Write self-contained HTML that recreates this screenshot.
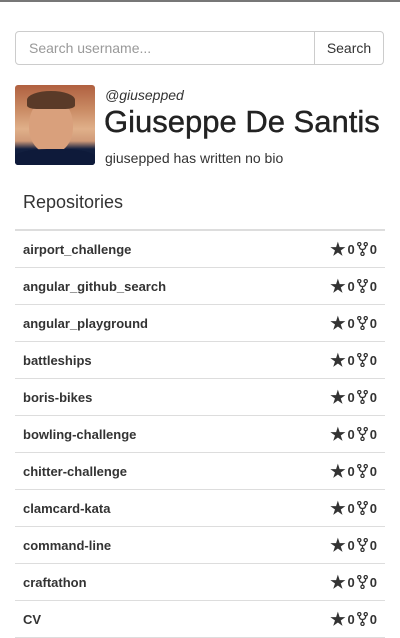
<!DOCTYPE html>
<html><head><style>
body{margin:0;width:400px;height:631px;overflow:hidden;background:#fff;font-family:"Liberation Sans",Arial,sans-serif;color:#333;position:relative}
.topline{position:absolute;left:0;top:0;width:400px;height:2px;background:#777}
.search{position:absolute;left:15px;top:31px;width:367px;height:32px;border:1px solid #ccc;border-radius:4px;display:flex}
.search .in{flex:1;padding-left:13px;line-height:32px;font-size:14px;color:#999}
.search .bt{width:68px;border-left:1px solid #ccc;line-height:32px;font-size:14px;text-align:center;color:#333}
.av{position:absolute;left:15px;top:85px;width:80px;height:80px;border-radius:3px;background:linear-gradient(180deg,#b06040 0%,#c98a63 30%,#e0b08a 55%,#d09a78 70%,#132040 80%,#0c1838 100%);overflow:hidden}
.face{position:absolute;left:14px;top:12px;width:44px;height:56px;border-radius:50% 50% 45% 45%;background:#d9a07c}
.hair{position:absolute;left:12px;top:6px;width:48px;height:18px;border-radius:50% 50% 20% 20%;background:#5a3a28}
.shirt{position:absolute;left:0;top:64px;width:80px;height:20px;background:#0e1a3a;border-radius:40% 40% 0 0}
.user{position:absolute;left:105px;top:87px;font-size:14px;font-style:italic}
.name{position:absolute;left:104px;top:104px;font-size:31px;color:#222;-webkit-text-stroke:0.4px #222}
.bio{position:absolute;left:105px;top:150px;font-size:14px}
h3{position:absolute;left:23px;top:192px;margin:0;font-size:18px;font-weight:normal}
.list{position:absolute;left:15px;top:229px;width:370px;border-top:2px solid #ddd}
.row{height:36px;border-bottom:1px solid #ddd;display:flex;align-items:center;justify-content:space-between;padding:0 8px;font-size:13px;font-weight:bold}
.st{display:flex;align-items:center;gap:2px;font-size:13px}
.star{font-size:17px;line-height:13px}
</style></head><body>
<div class="topline"></div>
<div class="search"><div class="in">Search username...</div><div class="bt">Search</div></div>
<div class="av"><div class="face"></div><div class="hair"></div><div class="shirt"></div></div>
<div class="user">@giusepped</div>
<div class="name">Giuseppe De Santis</div>
<div class="bio">giusepped has written no bio</div>
<h3>Repositories</h3>
<div class="list">
<div class="row"><span>airport_challenge</span><span class="st"><span class="star">★</span> 0 <svg width="11" height="14" viewBox="0 0 10 13"><circle cx="2" cy="2" r="1.5" fill="none" stroke="#333" stroke-width="1.2"/><circle cx="8" cy="2" r="1.5" fill="none" stroke="#333" stroke-width="1.2"/><circle cx="5" cy="11" r="1.5" fill="none" stroke="#333" stroke-width="1.2"/><path d="M2 3.5Q2 7 5 7Q8 7 8 3.5M5 7V9.5" fill="none" stroke="#333" stroke-width="1.2"/></svg> 0</span></div>
<div class="row"><span>angular_github_search</span><span class="st"><span class="star">★</span> 0 <svg width="11" height="14" viewBox="0 0 10 13"><circle cx="2" cy="2" r="1.5" fill="none" stroke="#333" stroke-width="1.2"/><circle cx="8" cy="2" r="1.5" fill="none" stroke="#333" stroke-width="1.2"/><circle cx="5" cy="11" r="1.5" fill="none" stroke="#333" stroke-width="1.2"/><path d="M2 3.5Q2 7 5 7Q8 7 8 3.5M5 7V9.5" fill="none" stroke="#333" stroke-width="1.2"/></svg> 0</span></div>
<div class="row"><span>angular_playground</span><span class="st"><span class="star">★</span> 0 <svg width="11" height="14" viewBox="0 0 10 13"><circle cx="2" cy="2" r="1.5" fill="none" stroke="#333" stroke-width="1.2"/><circle cx="8" cy="2" r="1.5" fill="none" stroke="#333" stroke-width="1.2"/><circle cx="5" cy="11" r="1.5" fill="none" stroke="#333" stroke-width="1.2"/><path d="M2 3.5Q2 7 5 7Q8 7 8 3.5M5 7V9.5" fill="none" stroke="#333" stroke-width="1.2"/></svg> 0</span></div>
<div class="row"><span>battleships</span><span class="st"><span class="star">★</span> 0 <svg width="11" height="14" viewBox="0 0 10 13"><circle cx="2" cy="2" r="1.5" fill="none" stroke="#333" stroke-width="1.2"/><circle cx="8" cy="2" r="1.5" fill="none" stroke="#333" stroke-width="1.2"/><circle cx="5" cy="11" r="1.5" fill="none" stroke="#333" stroke-width="1.2"/><path d="M2 3.5Q2 7 5 7Q8 7 8 3.5M5 7V9.5" fill="none" stroke="#333" stroke-width="1.2"/></svg> 0</span></div>
<div class="row"><span>boris-bikes</span><span class="st"><span class="star">★</span> 0 <svg width="11" height="14" viewBox="0 0 10 13"><circle cx="2" cy="2" r="1.5" fill="none" stroke="#333" stroke-width="1.2"/><circle cx="8" cy="2" r="1.5" fill="none" stroke="#333" stroke-width="1.2"/><circle cx="5" cy="11" r="1.5" fill="none" stroke="#333" stroke-width="1.2"/><path d="M2 3.5Q2 7 5 7Q8 7 8 3.5M5 7V9.5" fill="none" stroke="#333" stroke-width="1.2"/></svg> 0</span></div>
<div class="row"><span>bowling-challenge</span><span class="st"><span class="star">★</span> 0 <svg width="11" height="14" viewBox="0 0 10 13"><circle cx="2" cy="2" r="1.5" fill="none" stroke="#333" stroke-width="1.2"/><circle cx="8" cy="2" r="1.5" fill="none" stroke="#333" stroke-width="1.2"/><circle cx="5" cy="11" r="1.5" fill="none" stroke="#333" stroke-width="1.2"/><path d="M2 3.5Q2 7 5 7Q8 7 8 3.5M5 7V9.5" fill="none" stroke="#333" stroke-width="1.2"/></svg> 0</span></div>
<div class="row"><span>chitter-challenge</span><span class="st"><span class="star">★</span> 0 <svg width="11" height="14" viewBox="0 0 10 13"><circle cx="2" cy="2" r="1.5" fill="none" stroke="#333" stroke-width="1.2"/><circle cx="8" cy="2" r="1.5" fill="none" stroke="#333" stroke-width="1.2"/><circle cx="5" cy="11" r="1.5" fill="none" stroke="#333" stroke-width="1.2"/><path d="M2 3.5Q2 7 5 7Q8 7 8 3.5M5 7V9.5" fill="none" stroke="#333" stroke-width="1.2"/></svg> 0</span></div>
<div class="row"><span>clamcard-kata</span><span class="st"><span class="star">★</span> 0 <svg width="11" height="14" viewBox="0 0 10 13"><circle cx="2" cy="2" r="1.5" fill="none" stroke="#333" stroke-width="1.2"/><circle cx="8" cy="2" r="1.5" fill="none" stroke="#333" stroke-width="1.2"/><circle cx="5" cy="11" r="1.5" fill="none" stroke="#333" stroke-width="1.2"/><path d="M2 3.5Q2 7 5 7Q8 7 8 3.5M5 7V9.5" fill="none" stroke="#333" stroke-width="1.2"/></svg> 0</span></div>
<div class="row"><span>command-line</span><span class="st"><span class="star">★</span> 0 <svg width="11" height="14" viewBox="0 0 10 13"><circle cx="2" cy="2" r="1.5" fill="none" stroke="#333" stroke-width="1.2"/><circle cx="8" cy="2" r="1.5" fill="none" stroke="#333" stroke-width="1.2"/><circle cx="5" cy="11" r="1.5" fill="none" stroke="#333" stroke-width="1.2"/><path d="M2 3.5Q2 7 5 7Q8 7 8 3.5M5 7V9.5" fill="none" stroke="#333" stroke-width="1.2"/></svg> 0</span></div>
<div class="row"><span>craftathon</span><span class="st"><span class="star">★</span> 0 <svg width="11" height="14" viewBox="0 0 10 13"><circle cx="2" cy="2" r="1.5" fill="none" stroke="#333" stroke-width="1.2"/><circle cx="8" cy="2" r="1.5" fill="none" stroke="#333" stroke-width="1.2"/><circle cx="5" cy="11" r="1.5" fill="none" stroke="#333" stroke-width="1.2"/><path d="M2 3.5Q2 7 5 7Q8 7 8 3.5M5 7V9.5" fill="none" stroke="#333" stroke-width="1.2"/></svg> 0</span></div>
<div class="row"><span>CV</span><span class="st"><span class="star">★</span> 0 <svg width="11" height="14" viewBox="0 0 10 13"><circle cx="2" cy="2" r="1.5" fill="none" stroke="#333" stroke-width="1.2"/><circle cx="8" cy="2" r="1.5" fill="none" stroke="#333" stroke-width="1.2"/><circle cx="5" cy="11" r="1.5" fill="none" stroke="#333" stroke-width="1.2"/><path d="M2 3.5Q2 7 5 7Q8 7 8 3.5M5 7V9.5" fill="none" stroke="#333" stroke-width="1.2"/></svg> 0</span></div>
</div>
</body></html>
